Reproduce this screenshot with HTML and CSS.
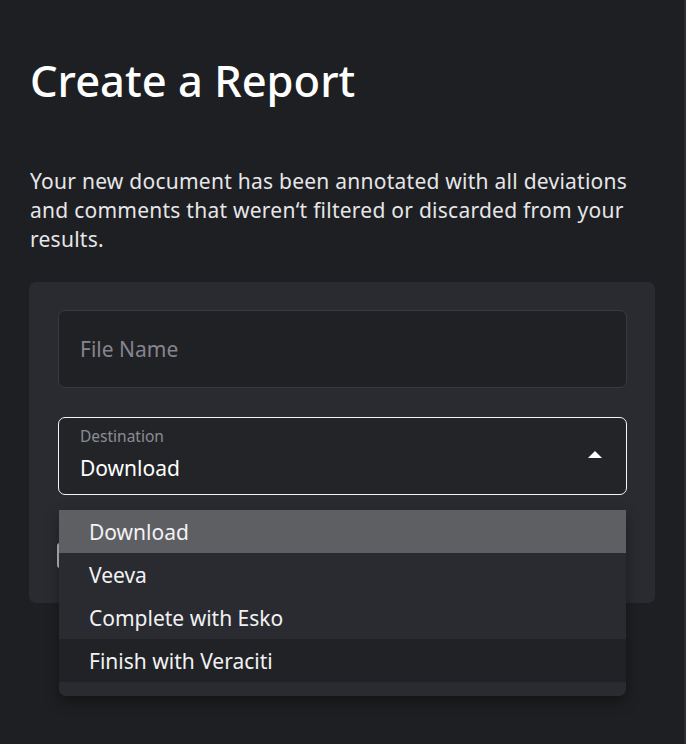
FILE: index.html
```html
<!DOCTYPE html>
<html>
<head>
<meta charset="utf-8">
<link rel="stylesheet" href="styles.css">
</head>
<body>
<div class="page">
  <h1 class="title">Create a Report</h1>
  <p class="intro">Your new document has been annotated with all deviations and comments that weren‘t filtered or discarded from your results.</p>
  <div class="card">
    <div class="field input"><span class="placeholder">File Name</span></div>
    <div class="field select">
      <div class="select-text">
        <span class="label">Destination</span>
        <span class="value">Download</span>
      </div>
      <span class="arrow"></span>
    </div>
    <div class="check-row"><span class="checkbox"></span></div>
    <ul class="menu">
      <li class="item selected">Download</li>
      <li class="item">Veeva</li>
      <li class="item">Complete with Esko</li>
      <li class="item hover">Finish with Veraciti</li>
    </ul>
  </div>
</div>
</body>
</html>
```
FILE: styles.css
```css
* { box-sizing: border-box; }
html, body { margin: 0; padding: 0; }
body {
  background: #1e1f22;
  font-family: "Noto Sans", "Open Sans", sans-serif;
  color: #ececee;
}
.page {
  width: 686px;
  height: 744px;
  padding: 50px 31px 0 29px;
  border-right: 2px solid #2c2d31;
}
.title {
  margin: 0 0 0 1px;
  font-size: 43.5px;
  line-height: 60px;
  font-weight: 500;
  color: #ffffff;
}
.intro {
  margin: 57px 0 0 1px;
  font-size: 21px;
  letter-spacing: 0.25px;
  line-height: 29px;
  color: #e6e6e9;
  width: 606px;
}
.card {
  position: relative;
  margin-top: 28px;
  width: 626px;
  background: #2a2b30;
  border-radius: 7px;
  padding: 28px 28px 35px 29px;
  display: flex;
  flex-direction: column;
}
.field {
  height: 78px;
  border-radius: 7px;
  background: #202125;
}
.input {
  border: 1px solid #393a3f;
  display: flex;
  align-items: center;
  padding-left: 21px;
}
.placeholder {
  font-size: 21px;
  color: #85858f;
}
.select {
  margin-top: 29px;
  border: 1px solid #f4f4f6;
  background: #232428;
  display: flex;
  align-items: center;
  justify-content: space-between;
  padding: 0 24px 0 21px;
}
.select-text {
  display: flex;
  flex-direction: column;
  align-self: flex-start;
  padding-top: 8px;
}
.label {
  font-size: 15.5px;
  line-height: 21px;
  color: #8c8c95;
}
.value {
  margin-top: 7px;
  font-size: 21px;
  line-height: 29px;
  color: #ffffff;
}
.arrow {
  width: 0;
  height: 0;
  border-left: 7px solid transparent;
  border-right: 7px solid transparent;
  border-bottom: 7px solid #ffffff;
  margin-top: -3px;
}
.check-row {
  margin-top: 48px;
  height: 25px;
  display: flex;
  align-items: center;
}
.checkbox {
  width: 22px;
  height: 25px;
  border: 2px solid #b9b9bd;
  border-radius: 3px;
  margin-left: -1px;
}
.menu {
  position: absolute;
  left: 30px;
  top: 228px;
  width: 567px;
  margin: 0;
  padding: 0 0 14px;
  list-style: none;
  background: #2a2b30;
  border-radius: 0 0 7px 7px;
  box-shadow: 0 6px 14px rgba(0, 0, 0, 0.35);
}
.item {
  height: 43px;
  display: flex;
  align-items: center;
  padding-left: 30px;
  font-size: 21px;
  color: #f2f2f4;
}
.item.selected { background: #5e5f63; }
.item.hover { background: #212226; }
```
